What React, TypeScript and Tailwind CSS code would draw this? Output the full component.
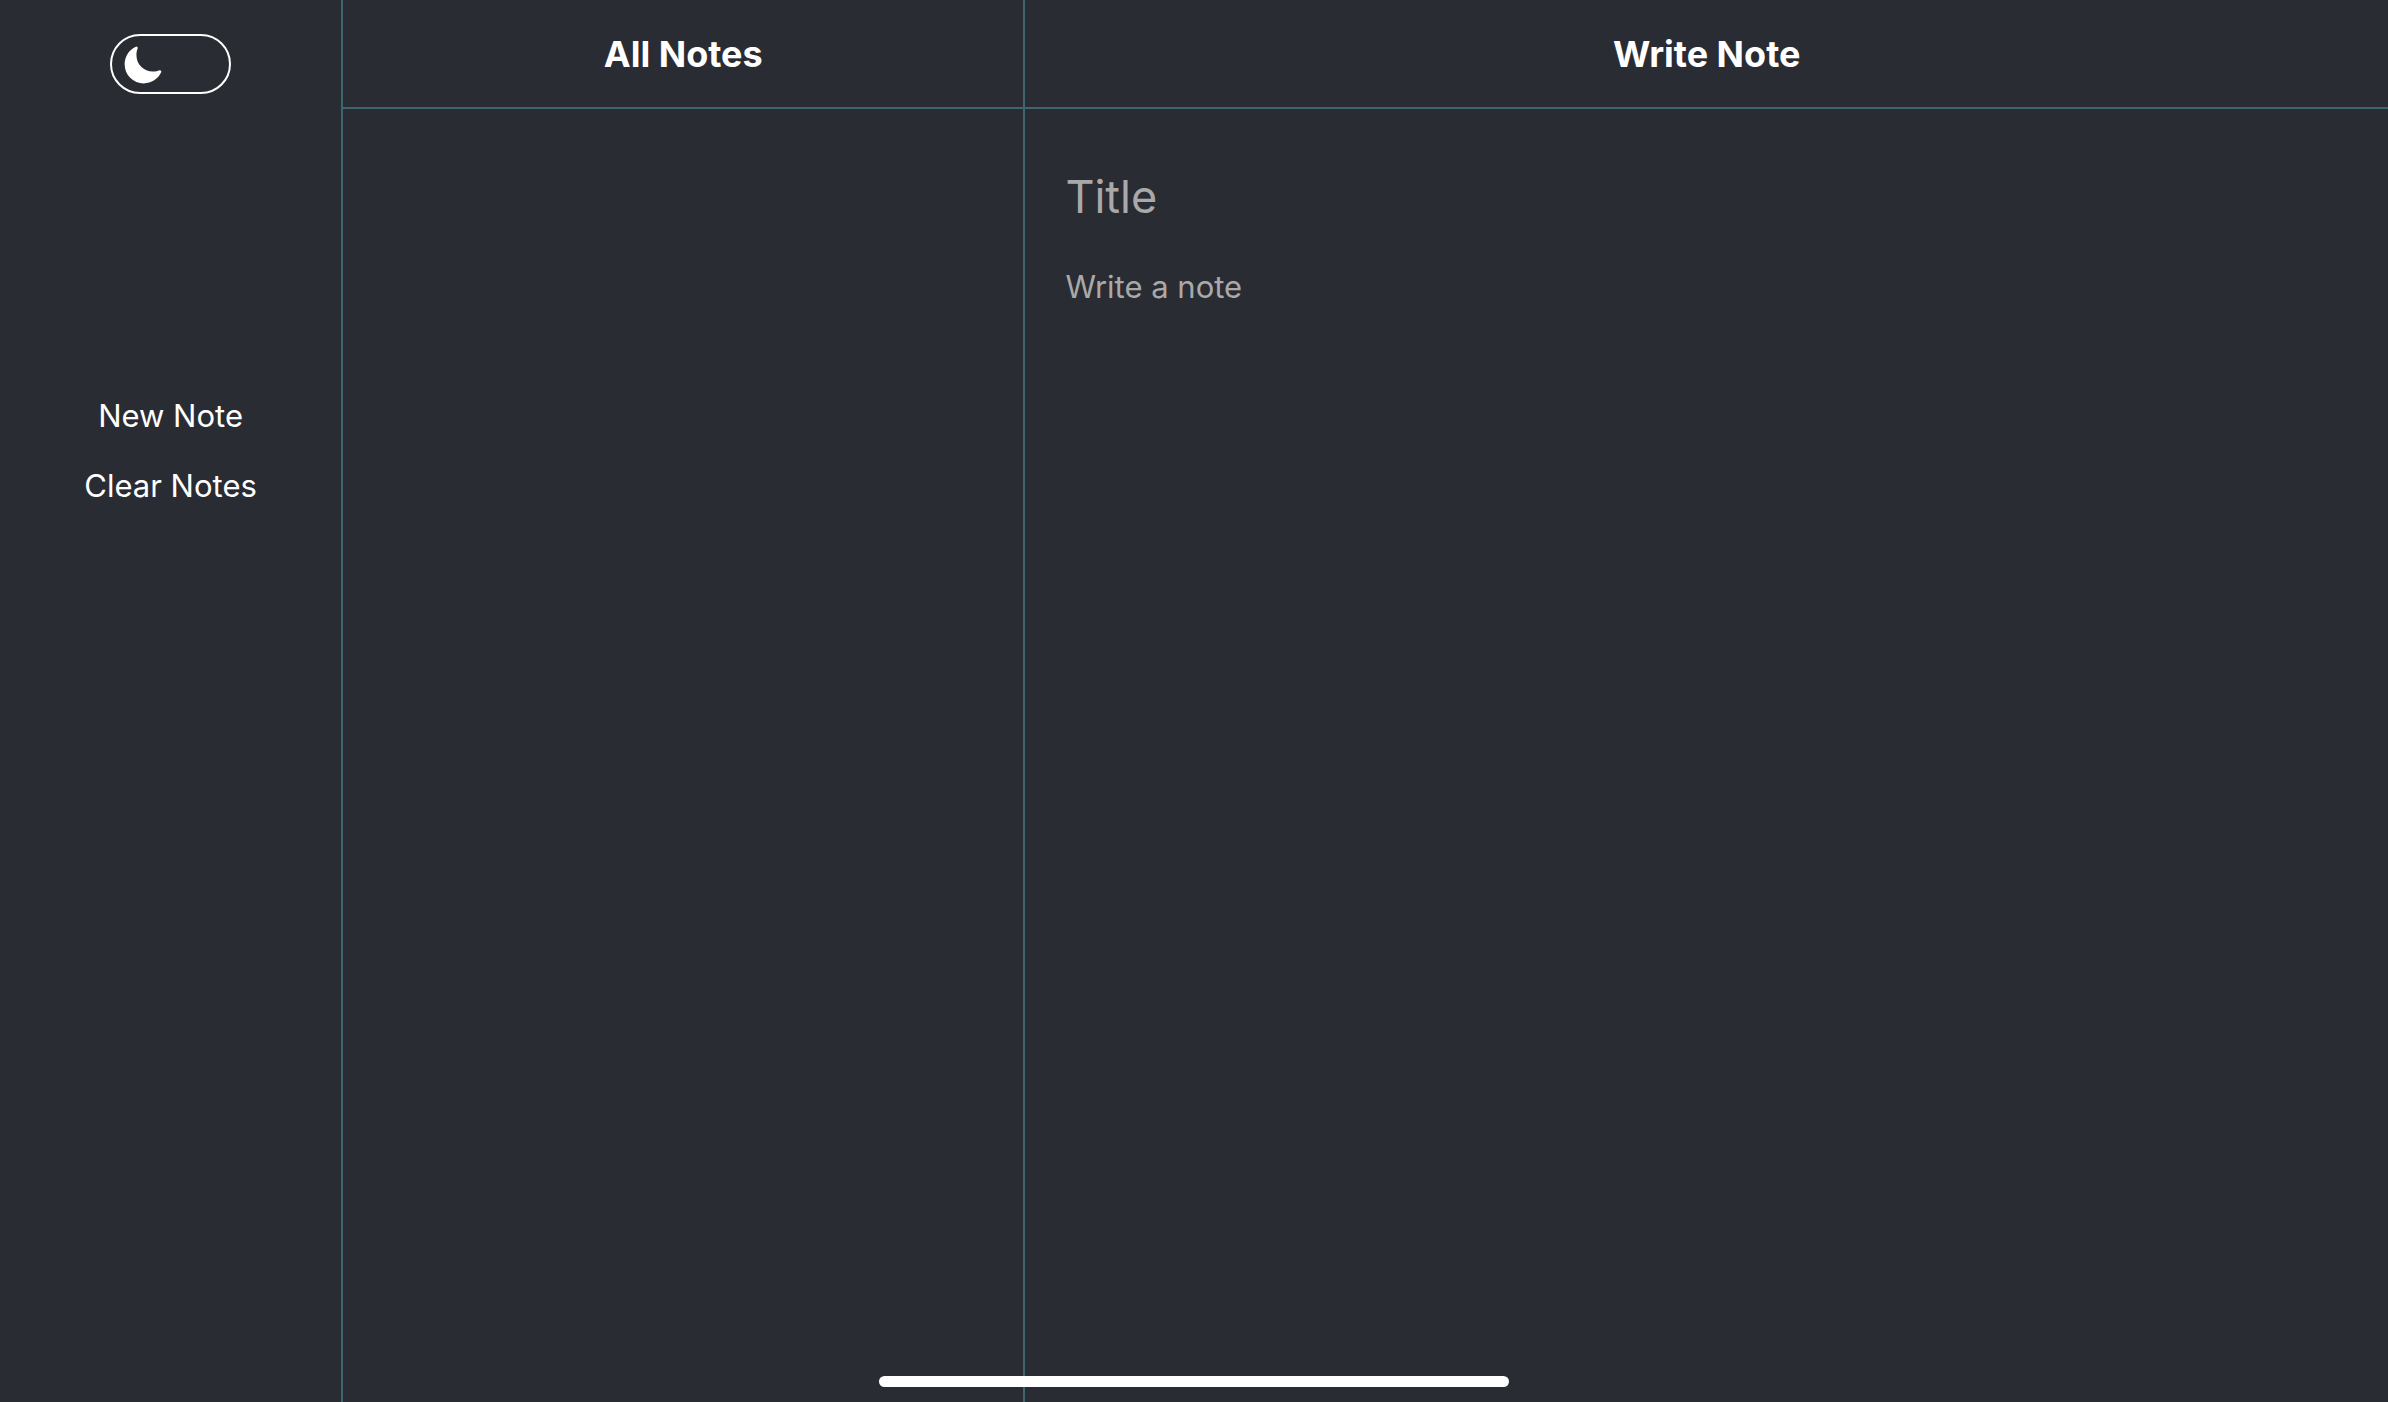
import { useState } from "react";

function MoonIcon() {
  return (
    <svg viewBox="0 0 512 512" className="size-[42px] fill-white" aria-hidden="true">
      <path d="M264 480A232 232 0 0 1 32 248c0-94 54-178.28 137.61-214.67a16 16 0 0 1 21.06 21.06C181.07 76.43 176 104.66 176 136c0 110.28 89.72 200 200 200 31.34 0 59.57-5.07 81.61-14.67a16 16 0 0 1 21.06 21.06C442.28 426 358 480 264 480z" />
    </svg>
  );
}

function Sidebar({ onNew, onClear }: { onNew: () => void; onClear: () => void }) {
  return (
    <aside className="flex flex-col items-center pt-[34px]">
      <button
        type="button"
        aria-label="Dark mode"
        className="flex h-[60px] w-[121px] items-center rounded-full border-2 border-white pt-px pl-2.5"
      >
        <MoonIcon />
      </button>
      <nav className="mt-[302px] flex flex-col items-center gap-[30px] text-[31px] leading-10">
        <button type="button" onClick={onNew}>New Note</button>
        <button type="button" onClick={onClear}>Clear Notes</button>
      </nav>
    </aside>
  );
}

function PanelHeader({ title }: { title: string }) {
  return (
    <header className="border-b-2 border-[#3d666f] px-4 pt-8 pb-[31px] text-center">
      <h2 className="text-[36px] leading-[44px] font-bold">{title}</h2>
    </header>
  );
}

export default function App() {
  const [title, setTitle] = useState("");
  const [body, setBody] = useState("");
  const reset = () => {
    setTitle("");
    setBody("");
  };

  return (
    <div className="relative grid min-h-screen grid-cols-[1fr_2fr_4fr] bg-[#2a2c34] font-['Inter',sans-serif] text-white">
      <Sidebar onNew={reset} onClear={reset} />
      <section className="border-l-2 border-[#3d666f]">
        <PanelHeader title="All Notes" />
      </section>
      <main className="flex flex-col border-l-2 border-[#3d666f]">
        <PanelHeader title="Write Note" />
        <div className="flex grow flex-col px-10 pt-[58px]">
          <input
            type="text"
            aria-label="Title"
            placeholder="Title"
            value={title}
            onChange={(e) => setTitle(e.target.value)}
            className="h-[60px] w-full bg-transparent text-[45px] outline-none placeholder:text-[#a9a9a9]"
          />
          <textarea
            aria-label="Note"
            placeholder="Write a note"
            value={body}
            onChange={(e) => setBody(e.target.value)}
            className="mt-10 w-full grow resize-none bg-transparent text-[31px] leading-10 outline-none placeholder:text-[#a9a9a9]"
          />
        </div>
      </main>
      <div className="absolute bottom-[15px] left-1/2 h-[11px] w-[630px] -translate-x-1/2 rounded-full bg-white" />
    </div>
  );
}
